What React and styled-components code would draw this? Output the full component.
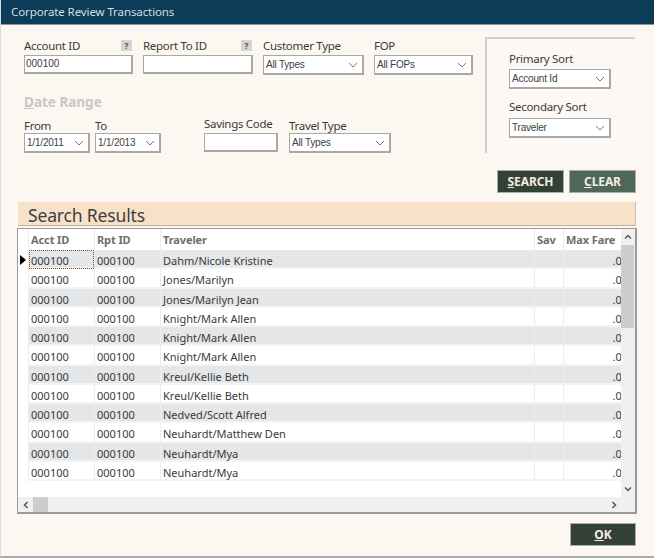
import React from "react";
import styled, { createGlobalStyle } from "styled-components";

const Global = createGlobalStyle`
  html, body { margin: 0; padding: 0; background: #fdf7f1; }
  * { box-sizing: border-box; }
`;
const uiFont = `"Noto Sans", "Open Sans", "DejaVu Sans", sans-serif`;
const fieldFont = `"Liberation Sans", Arial, sans-serif`;

const Window = styled.div`
  width: 654px; height: 558px; display: flex; flex-direction: column;
  background: #fdf7f1; border-bottom: 2px solid #a9adad; border-left: 1px solid #d8dcdc;
  font-family: ${uiFont}; color: #3c3c3c; overflow: hidden;
`;
const TitleBar = styled.div`
  height: 25px; flex: none; background: #0c3c58; border-bottom: 1px solid #8a9aa3;
  color: #d4dde2; font-size: 11.5px; line-height: 24px; padding-left: 10px; letter-spacing: -0.1px;
`;
const Filters = styled.div`
  display: flex; height: 127px; padding: 12px 19px 0 23px; flex: none; justify-content: space-between;
`;
const FieldsColumn = styled.div`display: flex; flex-direction: column;`;
const RowOne = styled.div`display: flex; gap: 10px;`;
const DateHeading = styled.div`
  font-size: 13.5px; font-weight: 700; color: #c6c6c4; line-height: 18px; margin-top: 18px;
  span { text-decoration: underline; }
`;
const RowTwo = styled.div`display: flex; margin-top: 6px; align-items: flex-start;`;
const Field = styled.div`
  display: flex; flex-direction: column; width: ${p => p.$w}px;
  margin-left: ${p => p.$ml || 0}px; margin-top: ${p => p.$mt || 0}px;
`;
const LabelRow = styled.div`display: flex; justify-content: space-between; align-items: flex-start; height: ${p => p.$h || 18}px;`;
const Label = styled.label`font-size: 11.5px; line-height: 18px; letter-spacing: -0.3px; white-space: nowrap; color: #3a3a3a;`;
const Help = styled.span`
  width: 11px; height: 11px; background: #d5d5d3; color: #555; font-size: 9px; font-weight: 700;
  line-height: 11px; text-align: center; margin-top: 3px; margin-right: 1px;
`;
const TextBox = styled.div`
  height: 19px; background: #fff; border: 1px solid #a8a8a8; border-bottom-width: 2px; border-right-width: 2px;
  font: 10px/16px ${fieldFont}; color: #404040; padding-left: 1px;
`;
const SelectBox = styled(TextBox)`
  height: 20px; display: flex; justify-content: space-between; align-items: center; padding: 0 4px 0 2px; letter-spacing: -0.2px;
`;
const Chevron = () => (
  <svg width="10" height="6" viewBox="0 0 10 6"><path d="M1 1l4 4 4-4" fill="none" stroke="#777" strokeWidth="1" /></svg>
);
const Select = ({ value }) => <SelectBox><span>{value}</span><Chevron /></SelectBox>;

const SortBox = styled.div`
  width: 150px; height: 116px; border: 1px solid #d0d0cc; border-bottom: 0; border-right: 0;
  border-top-width: 2px; border-left-width: 2px; padding: 11px 24px 0 22px;
  background: #fdf8f3; display: flex; flex-direction: column; gap: 9px;
`;
const SortField = styled.div`display: flex; flex-direction: column;`;

const ButtonRow = styled.div`display: flex; justify-content: flex-end; gap: 5px; padding-right: 18px; height: 23px; margin-top: 18px; flex: none;`;
const ActionButton = styled.button`
  width: ${p => p.$w || 67}px; height: 23px; padding: 0; border: 1px solid #a9aea9;
  background: ${p => p.$light ? "#4f6758" : "#334036"}; color: #f1ede2;
  font: 700 12px/20px ${uiFont}; letter-spacing: -0.1px;
  span { text-decoration: underline; }
`;
const ResultsHeading = styled.div`
  margin: 9px 18px 0 17px; height: 24px; flex: none; background: #f7e2c9; border-right: 1px solid #c9bba9; border-bottom: 1px solid #bdb3a4;
  font-size: 17.6px; line-height: 26px; padding-left: 10px; color: #3e3e3e; letter-spacing: -0.2px;
`;
const GridFrame = styled.div`
  margin: 2px 17px 0 16px; height: 286px; flex: none; border: 1px solid #9a9a9a; border-right-width: 2px; border-bottom-width: 2px;
  background: #fff; display: grid; grid-template-columns: 1fr 14px; grid-template-rows: 1fr 15px; overflow: hidden;
`;
const GridBody = styled.div`overflow: hidden; min-width: 0;`;
const Row = styled.div`
  display: grid; grid-template-columns: 11px 65px 1px 65px 1px 373px 1px 28px 1px 70px;
  height: ${p => p.$head ? 21 : 19.27}px; background: ${p => p.$alt ? "#e4e6e8" : "#fff"};
  width: 617px;
  box-shadow: ${p => p.$head ? "none" : "inset 0 -2px 0 #f4f4f4"};
`;
const Indicator = styled.div`background: #fff; border-right: 1px solid #eceded; display: flex; align-items: center; justify-content: center;`;
const Sep = styled.div`background: #eceded;`;
const Cell = styled.div`
  font-size: 11px; line-height: 21px; padding-left: 2px; white-space: nowrap; overflow: hidden; color: #3a3a3a;
  ${p => p.$focus && "outline: 1px dotted #7b4a20; outline-offset: -1px;"}
  ${p => p.$right && "text-align: right; padding: 0 6px 0 0;"}
`;
const HeadCell = styled.div`font-size: 11px; font-weight: 700; line-height: 21px; padding-left: 2px; color: #6e6e6e; letter-spacing: -0.1px; white-space: nowrap;`;
const VScroll = styled.div`background: #f0f0f0; display: flex; flex-direction: column; align-items: stretch;`;
const HScroll = styled.div`background: #f0f0f0; display: flex; align-items: stretch; justify-content: space-between;`;
const Corner = styled.div`background: #f0f0f0;`;
const ScrollArrow = styled.div`height: ${p => p.$s}px; width: ${p => p.$w || "auto"}; flex: none; display: flex; align-items: center; justify-content: center;`;
const VThumb = styled.div`height: 83px; background: #cdcdcd; margin-right: 1px;`;
const HThumb = styled.div`width: 15px; background: #cdcdcd;`;
const HLeft = styled.div`display: flex;`;
const Spacer = styled.div`flex: 1;`;
const Footer = styled.div`display: flex; justify-content: flex-end; padding: 9px 18px 0 0;`;

const ArrowIcon = ({ d }) => (
  <svg width="8" height="8" viewBox="0 0 8 8"><path d={d} fill="none" stroke="#555" strokeWidth="1.5" /></svg>
);

const rows = [
  "Dahm/Nicole Kristine", "Jones/Marilyn", "Jones/Marilyn Jean", "Knight/Mark Allen", "Knight/Mark Allen", "Knight/Mark Allen",
  "Kreul/Kellie Beth", "Kreul/Kellie Beth", "Nedved/Scott Alfred", "Neuhardt/Matthew Den", "Neuhardt/Mya", "Neuhardt/Mya",
];

export default function App() {
  return (
    <Window>
      <Global />
      <TitleBar>Corporate Review Transactions</TitleBar>
      <Filters>
        <FieldsColumn>
          <RowOne>
            <Field $w={109}>
              <LabelRow><Label>Account ID</Label><Help>?</Help></LabelRow>
              <TextBox>000100</TextBox>
            </Field>
            <Field $w={110}>
              <LabelRow><Label>Report To ID</Label><Help>?</Help></LabelRow>
              <TextBox />
            </Field>
            <Field $w={101}>
              <LabelRow><Label>Customer Type</Label></LabelRow>
              <Select value="All Types" />
            </Field>
            <Field $w={99}>
              <LabelRow><Label>FOP</Label></LabelRow>
              <Select value="All FOPs" />
            </Field>
          </RowOne>
          <DateHeading><span>D</span>ate Range</DateHeading>
          <RowTwo>
            <Field $w={66}>
              <LabelRow $h={16}><Label>From</Label></LabelRow>
              <Select value="1/1/2011" />
            </Field>
            <Field $w={66} $ml={5}>
              <LabelRow $h={16}><Label>To</Label></LabelRow>
              <Select value="1/1/2013" />
            </Field>
            <Field $w={74} $ml={43} $mt={-2}>
              <LabelRow><Label>Savings Code</Label></LabelRow>
              <TextBox />
            </Field>
            <Field $w={102} $ml={11}>
              <LabelRow $h={16}><Label>Travel Type</Label></LabelRow>
              <Select value="All Types" />
            </Field>
          </RowTwo>
        </FieldsColumn>
        <SortBox>
          <SortField>
            <LabelRow $h={19}><Label>Primary Sort</Label></LabelRow>
            <Select value="Account Id" />
          </SortField>
          <SortField>
            <LabelRow $h={20}><Label>Secondary Sort</Label></LabelRow>
            <Select value="Traveler" />
          </SortField>
        </SortBox>
      </Filters>
      <ButtonRow>
        <ActionButton><span>S</span>EARCH</ActionButton>
        <ActionButton $light><span>C</span>LEAR</ActionButton>
      </ButtonRow>
      <ResultsHeading>Search Results</ResultsHeading>
      <GridFrame>
        <GridBody>
          <Row $head>
            <Indicator />
            <HeadCell>Acct ID</HeadCell><Sep />
            <HeadCell>Rpt ID</HeadCell><Sep />
            <HeadCell>Traveler</HeadCell><Sep />
            <HeadCell>Sav</HeadCell><Sep />
            <HeadCell>Max Fare</HeadCell>
          </Row>
          {rows.map((name, i) => (
            <Row key={i} $alt={i % 2 === 0}>
              <Indicator>
                {i === 0 && <svg width="6" height="10" viewBox="0 0 6 10"><path d="M0 0l6 5-6 5z" fill="#000" /></svg>}
              </Indicator>
              <Cell $focus={i === 0}>000100</Cell><Sep />
              <Cell>000100</Cell><Sep />
              <Cell>{name}</Cell><Sep />
              <Cell /><Sep />
              <Cell $right>.00</Cell>
            </Row>
          ))}
        </GridBody>
        <VScroll>
          <ScrollArrow $s={16}><ArrowIcon d="M1 5.5l3-3 3 3" /></ScrollArrow>
          <VThumb />
          <Spacer />
          <ScrollArrow $s={16}><ArrowIcon d="M1 2.5l3 3 3-3" /></ScrollArrow>
        </VScroll>
        <HScroll>
          <HLeft>
            <ScrollArrow $s={15} $w="15px"><ArrowIcon d="M5.5 1l-3 3 3 3" /></ScrollArrow>
            <HThumb />
          </HLeft>
          <ScrollArrow $s={15} $w="15px"><ArrowIcon d="M2.5 1l3 3-3 3" /></ScrollArrow>
        </HScroll>
        <Corner />
      </GridFrame>
      <Footer>
        <ActionButton $w={66}><span>O</span>K</ActionButton>
      </Footer>
    </Window>
  );
}
